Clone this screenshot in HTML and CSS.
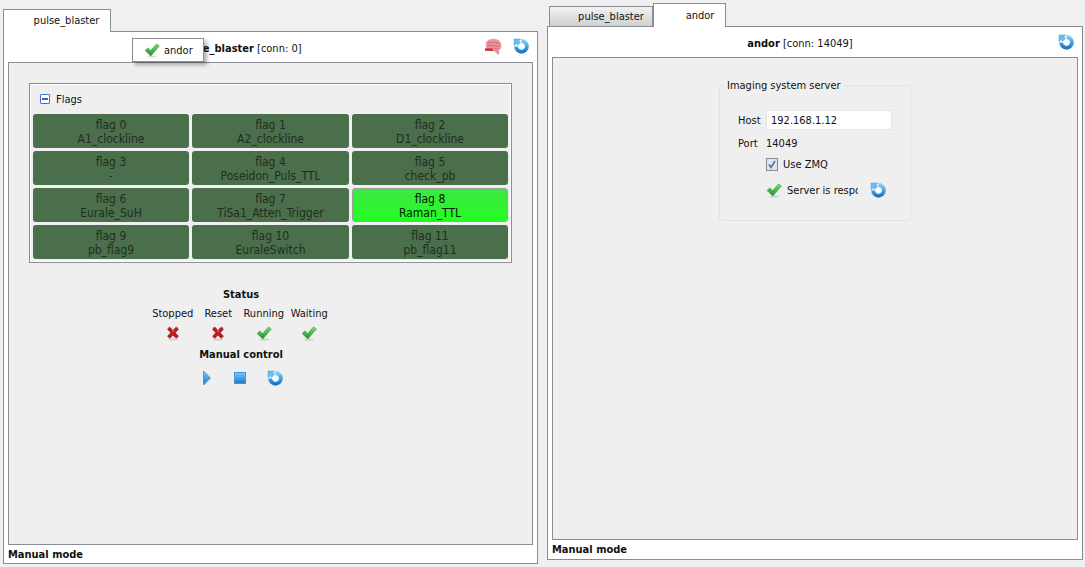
FILE: index.html
```html
<!DOCTYPE html>
<html lang="en">
<head>
  <meta charset="UTF-8">
  <title>Experiment control</title>
  <link rel="stylesheet" href="styles.css">
</head>
<body>
<svg class="sprite" width="0" height="0">
  <defs>
    <linearGradient id="greenGrad" x1="0" y1="0" x2="0" y2="1">
      <stop offset="0" stop-color="#7fe070"/>
      <stop offset="1" stop-color="#159030"/>
    </linearGradient>
    <linearGradient id="blueGrad" x1="0" y1="0" x2="0" y2="1">
      <stop offset="0" stop-color="#7cccf4"/>
      <stop offset="1" stop-color="#1a78c8"/>
    </linearGradient>
    <symbol id="i-check" viewBox="0 0 16 16">
      <ellipse cx="8" cy="14.6" rx="5" ry="1.2" fill="#000" opacity=".12"/>
      <path d="M1 8.5 L4 5.8 L6.6 8.6 L12.6 1.8 L15.4 4 L6.8 14 Z" fill="url(#greenGrad)" stroke="#2a9a3c" stroke-width=".5"/>
    </symbol>
    <symbol id="i-cross" viewBox="0 0 16 16">
      <ellipse cx="8" cy="14.6" rx="5" ry="1.2" fill="#000" opacity=".12"/>
      <path d="M3.5 3 L12.5 12.5 M12.5 3 L3.5 12.5" stroke="#b81d22" stroke-width="3.8" fill="none"/>
      <path d="M2.5 3 L4.5 1.8 M11.5 1.8 L13.5 3 M7 6 H9" stroke="#e98a8c" stroke-width="1" fill="none"/>
    </symbol>
    <symbol id="i-refresh" viewBox="0 0 16 16">
      <circle cx="8.5" cy="8.5" r="3.2" fill="#fff" opacity=".7"/>
      <path d="M8.5 3 A5.4 5.4 0 1 1 3.1 8.4" fill="none" stroke="url(#blueGrad)" stroke-width="3.8"/>
      <path d="M1 1 H7.6 L6 2.8 L7.4 4.4 L4.6 7.2 L3.1 5.7 L1 7.6 Z" fill="#6cc0ef" stroke="#3c9ce0" stroke-width=".5"/>
    </symbol>
    <symbol id="i-brain" viewBox="0 0 18 18">
      <path d="M2.2 7 C1.8 3.6 4.6 1.4 7.6 1.6 C10.8 .4 15.4 1.8 16.6 5.2 C17.8 8.4 16.6 11.4 14.6 12.2 C14.8 13.6 15 15 14.4 16.4 C13 15.8 11.8 14.2 10.8 13 C8 13.4 4 12.2 2.8 10.2 C2.3 9.2 2.1 8 2.2 7 Z" fill="#ec929e" stroke="#d9808c" stroke-width=".5"/>
      <path d="M4.4 5.2 C6.4 3.4 7.8 6 10 4.4 M11 3 C11.8 5.2 14 4.8 15.4 6.4 M3.6 8 C5.6 6.8 7 9 9.2 7.4 C11 6.8 12.4 9 15 8.4 M11 10.8 C12 10.2 13 11.2 14.2 10.6" stroke="#c4606f" stroke-width=".8" fill="none"/>
      <rect x="1" y="10.4" width="7.6" height="2.4" fill="#d3232b"/>
    </symbol>
    <symbol id="i-play" viewBox="0 0 8 16">
      <path d="M.5 1 L7.5 8 L.5 15 Z" fill="url(#blueGrad)" stroke="#2a86d0" stroke-width=".7"/>
    </symbol>
    <symbol id="i-stop" viewBox="0 0 12 12">
      <rect x=".5" y=".5" width="11" height="11" fill="url(#blueGrad)" stroke="#3b97dc"/>
    </symbol>
  </defs>
</svg>

<div class="panel panel-left">
  <div class="tabs">
    <div class="tab tab-active tab-main">pulse_blaster</div>
  </div>
  <div class="pane">
    <div class="pane-head">
      <div class="pane-title"><b>pulse_blaster</b> [conn: 0]</div>
      <div class="head-icons wide">
        <svg class="ico-brain"><use href="#i-brain"/></svg>
        <svg class="ico"><use href="#i-refresh"/></svg>
      </div>
    </div>
    <div class="frame">
      <div class="flags">
        <div class="flags-title">
          <span class="collapse"></span>
          <span>Flags</span>
        </div>
        <div class="flag-grid">
          <div class="flag">flag 0<br>A1_clockline</div>
          <div class="flag">flag 1<br>A2_clockline</div>
          <div class="flag">flag 2<br>D1_clockline</div>
          <div class="flag">flag 3<br>-</div>
          <div class="flag">flag 4<br>Poseidon_Puls_TTL</div>
          <div class="flag">flag 5<br>check_pb</div>
          <div class="flag">flag 6<br>Eurale_SuH</div>
          <div class="flag">flag 7<br>TiSa1_Atten_Trigger</div>
          <div class="flag on">flag 8<br>Raman_TTL</div>
          <div class="flag">flag 9<br>pb_flag9</div>
          <div class="flag">flag 10<br>EuraleSwitch</div>
          <div class="flag">flag 11<br>pb_flag11</div>
        </div>
      </div>

      <div class="status">
        <div class="status-head">Status</div>
        <div class="status-grid">
          <span>Stopped</span><span>Reset</span><span>Running</span><span>Waiting</span>
          <svg class="ico"><use href="#i-cross"/></svg>
          <svg class="ico"><use href="#i-cross"/></svg>
          <svg class="ico"><use href="#i-check"/></svg>
          <svg class="ico"><use href="#i-check"/></svg>
        </div>
        <div class="status-head manual">Manual control</div>
        <div class="manual-row">
          <svg class="ico-play"><use href="#i-play"/></svg>
          <svg class="ico-stop"><use href="#i-stop"/></svg>
          <svg class="ico"><use href="#i-refresh"/></svg>
        </div>
      </div>
    </div>
    <div class="pane-foot foot-left">Manual mode</div>
  </div>
  <div class="drag-tip">
    <svg class="ico"><use href="#i-check"/></svg>
    <span>andor</span>
  </div>
</div>

<div class="panel panel-right">
  <div class="tabs">
    <div class="tab tab-off">pulse_blaster</div>
    <div class="tab tab-active tab-andor">andor</div>
  </div>
  <div class="pane">
    <div class="pane-head">
      <div class="pane-title"><b>andor</b> [conn: 14049]</div>
      <div class="head-icons">
        <svg class="ico"><use href="#i-refresh"/></svg>
      </div>
    </div>
    <div class="frame frame-center">
      <fieldset class="server">
        <legend>Imaging system server</legend>
        <div class="server-row host-row">
          <span class="server-label">Host</span>
          <input class="host" type="text" value="192.168.1.12">
        </div>
        <div class="server-row port">
          <span class="server-label">Port</span>
          <span>14049</span>
        </div>
        <div class="server-row zmq">
          <span class="check-box"><svg viewBox="0 0 10 10"><path d="M2 5 L4 8 L8 1.5" fill="none" stroke="#5a6ea8" stroke-width="1.6"/></svg></span>
          <span>Use ZMQ</span>
        </div>
        <div class="server-row state">
          <svg class="ico"><use href="#i-check"/></svg>
          <span class="state-text">Server is responding</span>
          <svg class="ico"><use href="#i-refresh"/></svg>
        </div>
      </fieldset>
    </div>
    <div class="pane-foot">Manual mode</div>
  </div>
</div>
</body>
</html>
```

FILE: styles.css
```css
* {
  box-sizing: border-box;
}

body {
  margin: 0;
  height: 567px;
  overflow: hidden;
  background: #f0f0f0;
  display: flex;
  font-family: "DejaVu Sans", sans-serif;
  font-stretch: condensed;
  font-size: 11px;
  color: #111;
}

.sprite {
  position: absolute;
}

.panel {
  position: relative;
  display: flex;
  flex-direction: column;
}

.panel-left {
  width: 535px;
  height: 556px;
  margin: 8px 0 0 3px;
}

.panel-right {
  width: 536px;
  height: 558px;
  margin: 2px 0 0 9px;
}

/* tabs */
.tabs {
  display: flex;
  align-items: flex-end;
  flex: none;
}

.tab {
  border: 1px solid #898c95;
  border-bottom: none;
  text-align: center;
}

.tab-active {
  background: #fff;
  position: relative;
  top: 1px;
}

.tab-main {
  width: 108px;
  height: 23px;
  padding: 4px 0 0 19px;
}

.tab-andor {
  width: 73px;
  height: 24px;
  padding: 5px 0 0 21px;
}

.tab-off {
  width: 104px;
  height: 20px;
  margin-left: 2px;
  padding: 3px 0 0 20px;
  background: linear-gradient(#f2f2f2, #d0d0d0);
}

.pane {
  flex: 1;
  display: flex;
  flex-direction: column;
  background: #fff;
  border: 1px solid #898c95;
  padding: 0 4px 0 4px;
}

.pane-head {
  display: flex;
  align-items: center;
  height: 30px;
  flex: none;
}

.pane-title {
  flex: 1;
  padding-top: 2px;
  text-align: center;
}

.head-icons {
  width: 30px;
  display: flex;
  justify-content: flex-end;
  gap: 11px;
  padding-right: 4px;
}

.head-icons.wide {
  width: 60px;
}

.ico {
  width: 16px;
  height: 16px;
  flex: none;
}

.ico-brain {
  width: 18px;
  height: 18px;
}

.frame {
  flex: 1;
  background: #efefef;
  border: 1px solid #898c95;
  padding: 20px;
}

.frame-center {
  padding: 20px 0 0 166px;
}

.pane-foot {
  flex: none;
  height: 19px;
  font-weight: bold;
  line-height: 19px;
}

.foot-left {
  height: 18px;
}

/* flags */
.flags {
  height: 180px;
  border: 1px solid #8b8e95;
  box-shadow: inset 0 0 0 1px #fff;
  padding: 0 3px;
}

.flags-title {
  display: flex;
  align-items: center;
  gap: 6px;
  height: 30px;
  padding: 0 7px;
}

.collapse {
  position: relative;
  width: 10px;
  height: 10px;
  background: #fff;
  border: 1px solid #4a6fd0;
  border-radius: 1px;
}

.collapse::after {
  content: "";
  position: absolute;
  left: 1px;
  top: 3px;
  width: 6px;
  height: 2px;
  background: #3a62c8;
}

.flag-grid {
  display: grid;
  grid-template-columns: 156px 157px 156px;
  grid-auto-rows: 34px;
  gap: 3px;
}

.flag {
  background: #4b6f4b;
  border-radius: 3px;
  text-align: center;
  color: #222d22;
  font-size: 12px;
  line-height: 14px;
  padding-top: 4px;
}

.flag.on {
  background: linear-gradient(#40e545, #22ff22);
  border: 1px solid #9a9f9a;
  color: #001800;
  padding-top: 3px;
}

/* status */
.status {
  width: 184px;
  margin: 25px 0 0 121px;
  text-align: center;
}

.status-head {
  font-weight: bold;
  line-height: 14px;
  padding-right: 2px;
}

.status-grid {
  display: grid;
  grid-template-columns: repeat(4, 45.5px);
  justify-items: center;
  row-gap: 4px;
  margin: 5px 0 0;
  line-height: 14px;
  white-space: nowrap;
}

.manual {
  margin-top: 7px;
}

.manual-row {
  display: flex;
  justify-content: center;
  align-items: center;
  gap: 23px;
  margin-top: 8px;
  padding-left: 2px;
}

.ico-play {
  width: 8px;
  height: 16px;
}

.ico-stop {
  width: 12px;
  height: 12px;
  margin-right: -2px;
}

/* floating tooltip */
.drag-tip {
  position: absolute;
  left: 129px;
  top: 30px;
  width: 72px;
  height: 24px;
  display: flex;
  align-items: center;
  gap: 4px;
  padding-left: 11px;
  background: #fff;
  border: 1px solid #8b8e95;
  box-shadow: 3px 3px 4px rgba(0, 0, 0, 0.3);
}

/* server box */
.server {
  width: 192px;
  height: 143px;
  margin: 0;
  padding: 0;
  border: 1px solid #dfe3e8;
  border-radius: 3px;
}

.server legend {
  padding: 0 3px;
  margin-left: 4px;
  line-height: 15px;
}

.server-row {
  display: flex;
  align-items: center;
  margin-left: 18px;
}

.server-label {
  width: 28px;
}

.host-row {
  margin-top: 17px;
}

.host {
  width: 126px;
  height: 20px;
  padding: 0 4px;
  border: 1px solid #e4e4e4;
  background: #fff;
  font: inherit;
  color: #111;
}

.port {
  margin-top: 7px;
}

.zmq {
  margin: 8px 0 0 46px;
  gap: 5px;
}

.check-box {
  width: 12px;
  height: 13px;
  border: 1px solid #8a8a8a;
  background: #dfe3ee;
  display: flex;
}

.state {
  margin: 11px 0 0 46px;
}

.state-text {
  width: 71px;
  margin-left: 5px;
  overflow: hidden;
  white-space: nowrap;
}

.state .ico:last-child {
  margin-left: 12px;
}
```
